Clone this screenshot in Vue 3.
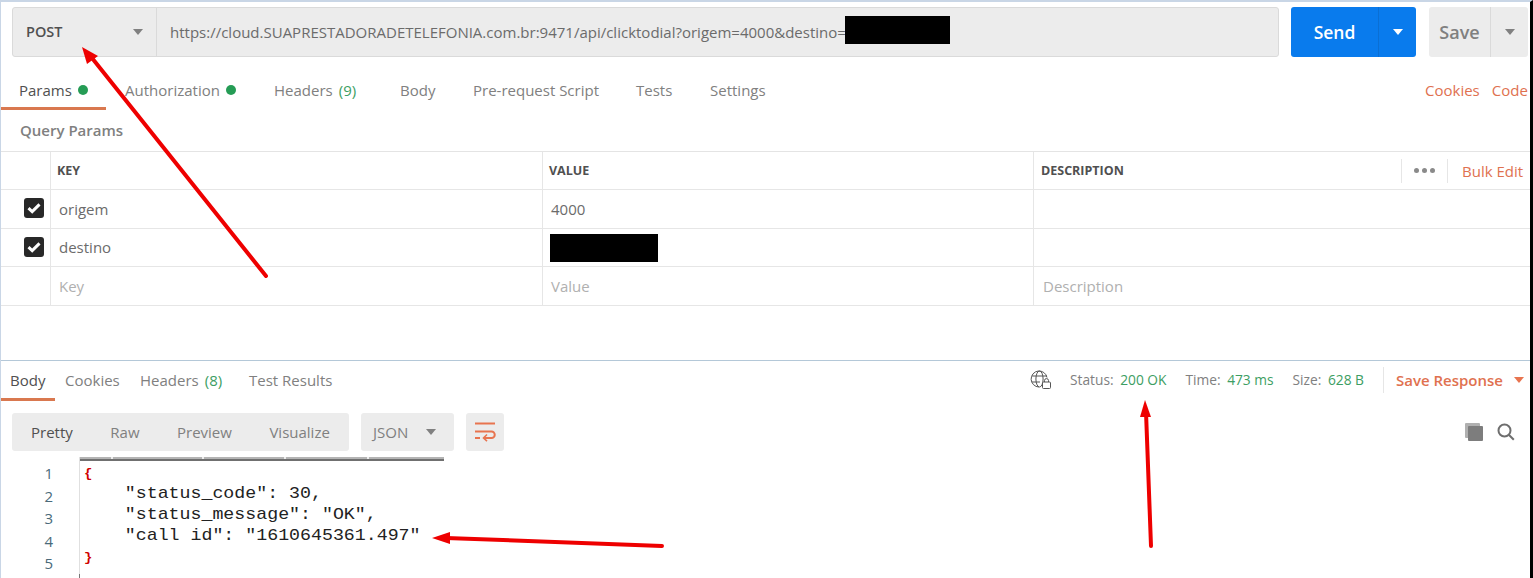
<script setup>
const reqTabs = [
  { label: 'Params', dot: true, active: true, w: 105 },
  { label: 'Authorization', dot: true, w: 149 },
  { label: 'Headers', count: '(9)', w: 126 },
  { label: 'Body', w: 73 },
  { label: 'Pre-request Script', w: 163 },
  { label: 'Tests', w: 74 },
  { label: 'Settings', w: 80 },
]
const rows = [
  { key: 'origem', value: '4000', checked: true, h: 39 },
  { key: 'destino', value: '', checked: true, h: 38 },
  { key: 'Key', value: 'Value', desc: 'Description', ghost: true, h: 39 },
]
const resTabs = [
  { label: 'Body', active: true, w: 54 },
  { label: 'Cookies', w: 75 },
  { label: 'Headers', count: '(8)', w: 109 },
  { label: 'Test Results', w: 100 },
]
const modes = ['Pretty', 'Raw', 'Preview', 'Visualize']
const ticks = [31, 122, 204, 287]
const code = [
  { t: '{', brace: true },
  { t: '    "status_code": 30,' },
  { t: '    "status_message": "OK",' },
  { t: '    "call id": "1610645361.497"' },
  { t: '}', brace: true },
]
</script>

<template>
  <div class="app">
    <div class="request-bar">
      <div class="url-box">
        <div class="method"><span>POST</span><i class="caret grey"></i></div>
        <div class="url">https://cloud.SUAPRESTADORADETELEFONIA.com.br:9471/api/clicktodial?origem=4000&amp;destino=</div>
      </div>
      <div class="send">
        <span class="send-label">Send</span>
        <span class="send-drop"><i class="caret white"></i></span>
      </div>
      <div class="save">
        <span class="save-label">Save</span>
        <span class="save-drop"><i class="caret grey"></i></span>
      </div>
    </div>

    <div class="tabs req-tabs">
      <div v-for="t in reqTabs" :key="t.label" class="tab" :class="{ active: t.active }" :style="{ width: t.w + 'px' }">
        <span>{{ t.label }}</span>
        <b v-if="t.dot" class="dot"></b>
        <em v-if="t.count" class="count">{{ t.count }}</em>
      </div>
      <div class="tab-links"><span>Cookies</span><span>Code</span></div>
    </div>

    <div class="query-title">Query Params</div>

    <div class="table">
      <div class="tr head">
        <div class="td check"></div>
        <div class="td">KEY</div>
        <div class="td">VALUE</div>
        <div class="td desc-head">
          <span>DESCRIPTION</span>
          <div class="head-actions">
            <span class="dots"><i></i><i></i><i></i></span>
            <span class="bulk">Bulk Edit</span>
          </div>
        </div>
      </div>
      <div v-for="r in rows" :key="r.key" class="tr" :class="{ ghost: r.ghost }" :style="{ height: r.h + 'px' }">
        <div class="td check">
          <span v-if="r.checked" class="box">
            <svg width="14" height="12" viewBox="0 0 14 12"><path d="M1.500 6.200 5.200 9.600 12.500 2.400" fill="none" stroke="#fff" stroke-width="3"/></svg>
          </span>
        </div>
        <div class="td">{{ r.key }}</div>
        <div class="td val">{{ r.value }}</div>
        <div class="td val desc">{{ r.desc }}</div>
      </div>
    </div>

    <div class="spacer"></div>

    <div class="response">
      <div class="tabs res-tabs">
        <div v-for="t in resTabs" :key="t.label" class="tab" :class="{ active: t.active }" :style="{ width: t.w + 'px' }">
          <span>{{ t.label }}</span>
          <em v-if="t.count" class="count">{{ t.count }}</em>
        </div>
        <div class="meta">
          <svg class="globe" width="22" height="20" viewBox="0 0 22 20" fill="none" stroke="#555" stroke-width="1">
            <path d="M17 7.500A8 8 0 1 0 9 17" />
            <ellipse cx="9.500" cy="9" rx="3.600" ry="8" />
            <path d="M2 6h15M2 12h8" />
            <rect x="12.500" y="12" width="8" height="6.500" rx="1" fill="#fff"/>
            <path d="M14.500 12v-1.400a2 2 0 0 1 4 0V12" />
          </svg>
          <span class="m-item m-status">Status: <em>200 OK</em></span>
          <span class="m-item m-time">Time: <em>473 ms</em></span>
          <span class="m-item m-size">Size: <em>628 B</em></span>
          <span class="save-res">Save Response <i class="caret orange"></i></span>
        </div>
      </div>

      <div class="toolbar">
        <div class="modes">
          <span v-for="(m, i) in modes" :key="m" :class="{ on: i === 0 }">{{ m }}</span>
        </div>
        <div class="lang"><span>JSON</span><i class="caret grey"></i></div>
        <div class="wrap">
          <svg width="22" height="20" viewBox="0 0 22 20" fill="none" stroke="#e8744f" stroke-width="2">
            <path d="M1 1.500h20M1 9.500h16.500a3.200 3.200 0 0 1 0 6.500H10M1 16h5" />
            <path d="M13 12.500 9.500 16l3.500 3.200" stroke-width="1.600"/>
          </svg>
        </div>
        <div class="tool-icons">
          <svg width="18" height="18" viewBox="0 0 18 18"><rect x="0" y="0" width="15" height="15" rx="1" fill="#b0b0b0"/><rect x="3" y="3" width="15" height="15" rx="1" fill="#7d7d7d"/></svg>
          <svg width="18" height="18" viewBox="0 0 18 18" fill="none" stroke="#6e6e6e" stroke-width="2"><circle cx="7.500" cy="7.500" r="6"/><path d="m11.800 11.800 5 5"/></svg>
        </div>
      </div>

      <div class="code">
        <div class="gutter"><span v-for="n in 5" :key="n">{{ n }}</span></div>
        <div class="editor">
          <div class="ruler"><i v-for="x in ticks" :key="x" :style="{ left: x + 'px' }"></i></div>
          <pre v-for="(l, i) in code" :key="i" :class="{ brace: l.brace }">{{ l.t }}</pre>
        </div>
      </div>
    </div>

    <div class="redact r1"></div>
    <div class="redact r2"></div>

    <svg class="arrows" width="1533" height="578" viewBox="0 0 1533 578">
      <g stroke="#ee0000" stroke-width="4" stroke-linecap="round" fill="none">
        <path d="M266 276 92 58"/>
        <path d="M1151 546 1146 412"/>
        <path d="M662 546 446 538" />
      </g>
      <g fill="#ee0000">
        <path d="M82 47 98 56 87 64Z"/>
        <path d="M1145 400 1151 417 1140 417Z"/>
        <path d="M432 538 450 532 450 544Z"/>
      </g>
    </svg>
  </div>
</template>

<style>
html, body { margin: 0; background: #fff; }
</style>

<style scoped>
.app {
  position: relative;
  box-sizing: border-box;
  width: 1533px;
  height: 578px;
  overflow: hidden;
  display: flex;
  flex-direction: column;
  background: #fff;
  border-top: 2px solid #c9d6e6;
  border-left: 1px solid #c9d6e6;
  border-right: 3px solid #000;
  font-family: "Open Sans", sans-serif;
  font-size: 15px;
  color: #808080;
}
i, em { font-style: normal; }
.caret { display: inline-block; width: 0; height: 0; border-left: 5px solid transparent; border-right: 5px solid transparent; border-top: 6px solid #808080; }
.caret.white { border-top-color: #fff; }
.caret.orange { border-top-color: #e8744f; margin-left: 11px; }

.request-bar { display: flex; padding: 5px 0 0 11px; height: 50px; flex: none; }
.url-box { width: 1267px; display: flex; background: #ececec; border: 1px solid #dadada; border-radius: 3px; box-sizing: border-box; }
.method { width: 144px; box-sizing: border-box; padding: 0 13px 1px; border-right: 1px solid #dadada; display: flex; align-items: center; justify-content: space-between; color: #505050; font-weight: 600; font-size: 14.500px; }
.url { padding: 0 0 1px 13px; display: flex; align-items: center; color: #6b6b6b; white-space: nowrap; }
.send { margin-left: 12px; width: 125px; display: flex; background: #097bed; border-radius: 3px; color: #fff; font-weight: 600; font-size: 17.500px; }
.send-label { flex: 1; display: flex; align-items: center; justify-content: center; }
.send-drop { width: 37px; display: flex; align-items: center; justify-content: center; border-left: 1px solid #0a6fd4; }
.save { margin-left: 13px; width: 99px; display: flex; background: #ececec; border-radius: 3px; color: #808080; font-weight: 600; font-size: 18px; }
.save-label { flex: 1; display: flex; align-items: center; justify-content: center; }
.save-drop { width: 37px; display: flex; align-items: center; justify-content: center; border-left: 1px solid #dadada; }

.tabs { display: flex; flex: none; }
.tab { position: relative; box-sizing: border-box; display: flex; align-items: center; gap: 6px; white-space: nowrap; }
.tab.active { color: #505050; }
.tab.active::after { content: ""; position: absolute; left: 0; right: 0; bottom: 0; height: 3px; background: #d9784f; }
.req-tabs { height: 53px; }
.req-tabs .tab { padding: 13px 0 0 18px; }
.req-tabs .tab:not(:first-child) { padding-left: 19px; }
.dot { width: 10px; height: 10px; border-radius: 50%; background: #259c55; }
.count { color: #3d9e63; }
.tab-links { margin-left: auto; padding-top: 13px; display: flex; align-items: center; gap: 12px; color: #e0714f; white-space: nowrap; width: 105px; overflow: hidden; flex: none; }

.query-title { flex: none; height: 41px; box-sizing: border-box; padding: 0 0 1px 19px; display: flex; align-items: center; font-weight: 600; color: #808080; }

.table { flex: none; border-top: 1px solid #e4e4e4; }
.tr { display: grid; grid-template-columns: 50px 492px 491px 1fr; border-bottom: 1px solid #e6e6e6; box-sizing: border-box; }
.tr.head { height: 38px; font-size: 12.500px; font-weight: 700; color: #505050; }
.td { display: flex; align-items: center; padding: 0 0 1px 8px; border-right: 1px solid #e6e6e6; color: #6b6b6b; }
.head .td { color: #505050; padding: 0 0 0 6px; }
.head .td.desc-head { padding-left: 7px; }
.td:last-child { border-right: 0; }
.td.val { padding-left: 8px; }
.td.val.desc { padding-left: 9px; }
.ghost .td { color: #b0b0b0; }
.td.check { padding: 0 0 2px 23px; }
.box { width: 20px; height: 20px; border-radius: 3px; background: #282828; display: flex; align-items: center; justify-content: center; }
.desc-head { justify-content: space-between; }
.head-actions { display: flex; align-items: center; height: 26px; }
.dots { width: 47px; height: 24px; border-left: 1px solid #e6e6e6; border-right: 1px solid #e6e6e6; display: flex; align-items: center; justify-content: center; gap: 3px; box-sizing: border-box; }
.dots i { width: 5px; height: 5px; border-radius: 50%; background: #8a8a8a; }
.bulk { width: 82px; padding-left: 14px; box-sizing: border-box; color: #e0714f; font-size: 15px; font-weight: 400; white-space: nowrap; }

.spacer { flex: 1; }

.response { flex: none; height: 218px; border-top: 1px solid #b4c8d8; box-sizing: border-box; }
.res-tabs { height: 40px; }
.res-tabs .tab { padding: 0 0 3px 9px; }
.res-tabs .tab:not(:first-child) { padding-left: 10px; }
.meta { margin-left: auto; display: flex; align-items: center; white-space: nowrap; font-size: 13.750px; height: 40px; padding: 0 6px 3px 0; box-sizing: border-box; }
.globe { margin-right: 18px; }
.meta em { color: #3d9e63; margin-left: 3px; }
.m-item { margin-right: 19px; }
.save-res { border-left: 1px solid #e6e6e6; height: 26px; display: flex; align-items: center; padding-left: 12px; color: #e0714f; font-weight: 600; font-size: 15px; }

.toolbar { display: flex; align-items: stretch; height: 38px; margin: 12px 0 0 11px; color: #808080; }
.modes { width: 337px; background: #ececec; border-radius: 3px; display: flex; align-items: center; padding-left: 19px; box-sizing: border-box; gap: 37.500px; }
.modes .on { color: #505050; }
.lang { margin-left: 12px; width: 93px; background: #ececec; border-radius: 3px; display: flex; align-items: center; justify-content: space-between; padding: 0 18px 0 12px; box-sizing: border-box; }
.wrap { margin-left: 12px; width: 38px; background: #ececec; border-radius: 3px; display: flex; align-items: center; justify-content: center; }
.tool-icons { margin-left: auto; margin-right: 15px; display: flex; align-items: center; gap: 14px; }

.code { display: flex; margin-top: 6px; height: 121px; }
.gutter { width: 78px; box-sizing: border-box; padding: 5px 26px 0 0; display: flex; flex-direction: column; align-items: flex-end; line-height: 22.500px; color: #4a6a7a; font-size: 15px; }
.editor { flex: 1; border-left: 1px solid #e0e0e0; position: relative; padding: 6px 0 0 1px; }
.editor::after { content: ""; position: absolute; left: -1px; bottom: 0; width: 1px; height: 4px; background: #777; }
.ruler { position: absolute; left: 0; top: 0; width: 364px; height: 4px; background: linear-gradient(#b4b4b4 50%, #707070 50%); }
.ruler i { position: absolute; top: 0; width: 2px; height: 2px; background: #eee; }
pre { margin: 0; font-family: "Liberation Mono", monospace; font-size: 18.250px; line-height: 21px; color: #222; transform: scaleY(0.86); transform-origin: left center; }
.brace { color: #d00000; font-weight: 700; font-size: 14px; padding-left: 3px; }

.redact { position: absolute; background: #000; }
.r1 { left: 844px; top: 14px; width: 105px; height: 28px; }
.r2 { left: 549px; top: 232px; width: 108px; height: 28px; }
.arrows { position: absolute; left: -1px; top: -2px; pointer-events: none; }
</style>
